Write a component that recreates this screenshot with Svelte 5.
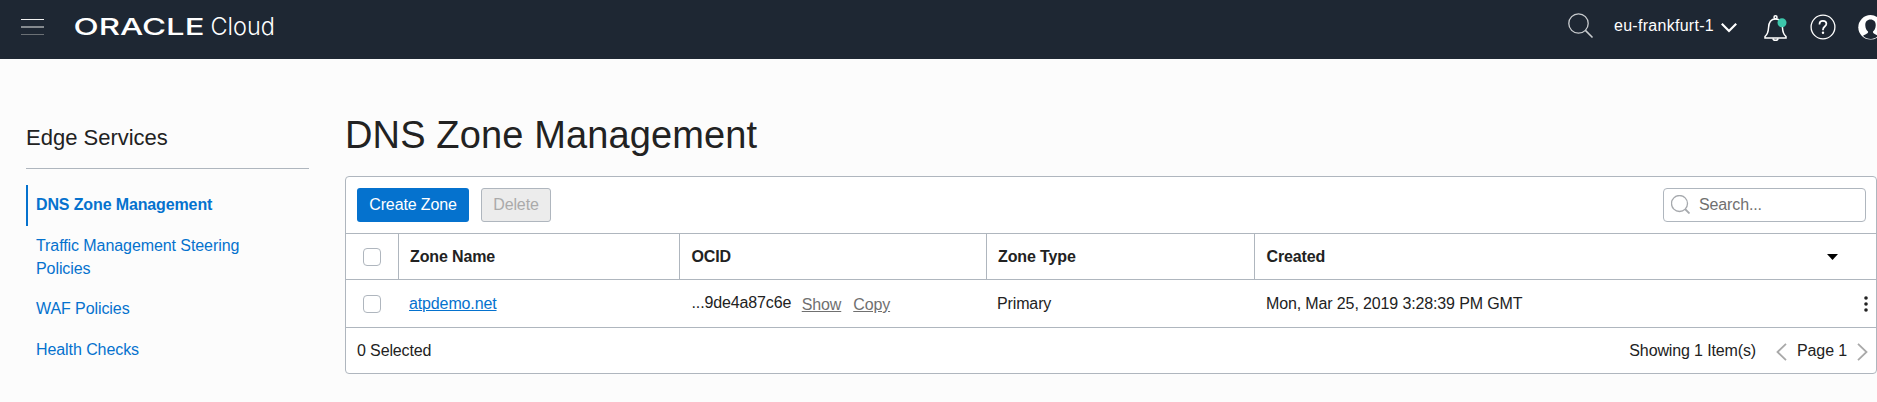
<script>
  const region = 'eu-frankfurt-1';
  const nav = [
    { label: 'DNS Zone Management', active: true },
    { label: 'Traffic Management Steering Policies' },
    { label: 'WAF Policies' },
    { label: 'Health Checks' },
  ];
  const zones = [
    { name: 'atpdemo.net', ocid: '...9de4a87c6e', type: 'Primary', created: 'Mon, Mar 25, 2019 3:28:39 PM GMT' },
  ];
</script>

<header class="topbar">
  <svg class="burger" width="23" height="16" viewBox="0 0 23 16">
    <rect width="23" height="1" fill="#f2f2f2" />
    <rect y="7" width="23" height="1" fill="#858a8f" />
    <rect y="8" width="23" height="1" fill="#858a8f" />
    <rect y="15" width="23" height="1" fill="#6b7075" />
  </svg>
  <svg class="brand" width="202" height="30" viewBox="0 0 202 30">
    <text class="oracle" x="-0.5" y="23.8" textLength="131" lengthAdjust="spacingAndGlyphs">ORACLE</text>
    <text class="cloud" x="136.5" y="23.8" textLength="64.5" lengthAdjust="spacingAndGlyphs">Cloud</text>
  </svg>
  <div class="tools">
    <svg class="find" width="26" height="26" viewBox="0 0 26 26" fill="none" stroke="#c9cccf" stroke-width="1.3">
      <circle cx="10.5" cy="10.5" r="9.7" />
      <path d="M17.4 17.4 24.5 24.5" stroke-width="1.6" />
    </svg>
    <span class="region">{region}</span>
    <svg class="down" width="16" height="10" viewBox="0 0 16 10" fill="none" stroke="#fff" stroke-width="2.2">
      <path d="M.8.8 8 8 15.2.8" />
    </svg>
    <svg class="bell" width="24" height="27" viewBox="0 0 24 27" fill="none" stroke="#fff" stroke-width="1.5">
      <circle cx="11.5" cy="2.3" r="1.5" />
      <path d="M1 22.9V21.5C3.5 19.3 4.3 17.5 4.5 13 4.7 7.5 6.5 4 11.5 4s6.8 3.5 7 9c.2 4.5 1 6.3 3.5 8.5v1.4Z" />
      <path d="M9 23.4c.2 2.6 4.800 2.600 5 0" />
      <circle cx="18" cy="7.8" r="4.5" fill="#3dc7ab" stroke="none" />
    </svg>
    <svg class="help" width="26" height="26" viewBox="0 0 26 26" fill="none" stroke="#fff" stroke-width="1.3">
      <circle cx="13" cy="13" r="11.9" />
      <path d="M9.5 10.6V10c0-2 1.400-3.200 3.400-3.200s3.500 1.200 3.500 3c0 2.700-3.400 2.700-3.400 5.600v.9" stroke-width="1.7" />
      <circle cx="13" cy="18.7" r="1.2" fill="#fff" stroke="none" />
    </svg>
    <svg class="user" width="19" height="25" viewBox="0 0 19 25">
      <circle cx="12.5" cy="12.3" r="12.2" fill="#fff" />
      <path d="M12.500 4.500c-3.500 0-5.400 2.500-5.200 6 .1 3 1.300 4.900 2.700 6 .4 1.700-.6 2.200-5 4.200 4 4.300 12 4.300 15 0-4-2-5.400-2.500-5-4.200 1.400-1.100 2.600-3 2.700-6 .2-3.500-1.700-6-5.200-6Z" fill="#1e2733" />
    </svg>
  </div>
</header>

<div class="layout">
  <aside>
    <h2>Edge Services</h2>
    <nav>
      {#each nav as item}
        <a href="#top" class:active={item.active}>{item.label}</a>
      {/each}
    </nav>
  </aside>
  <main>
    <h1>DNS Zone Management</h1>
    <section class="panel">
      <div class="toolbar">
        <button class="create">Create Zone</button>
        <button class="delete" disabled>Delete</button>
        <div class="search">
          <svg width="19" height="19" viewBox="0 0 19 19" fill="none" stroke="#a6a9ad" stroke-width="1.3">
            <circle cx="8.5" cy="8.5" r="8" />
            <path d="m14 14 4.5 4.5" stroke-width="1.8" />
          </svg>
          <span>Search...</span>
        </div>
      </div>
      <div class="row head">
        <div class="check"><i></i></div>
        <div>Zone Name</div>
        <div class="id">OCID</div>
        <div>Zone Type</div>
        <div class="created">Created
          <svg width="11" height="6" viewBox="0 0 11 6"><path d="M0 0h11L5.5 6Z" fill="#000" /></svg>
        </div>
      </div>
      {#each zones as zone}
        <div class="row body">
          <div class="check"><i></i></div>
          <div><a class="zone" href="#top">{zone.name}</a></div>
          <div class="id"><span>{zone.ocid}</span><a href="#top">Show</a><a href="#top">Copy</a></div>
          <div>{zone.type}</div>
          <div class="created">{zone.created}
            <svg class="kebab" width="4" height="16" viewBox="0 0 4 16" fill="#222">
              <circle cx="2" cy="2" r="1.8" /><circle cx="2" cy="8" r="1.8" /><circle cx="2" cy="14" r="1.8" />
            </svg>
          </div>
        </div>
      {/each}
      <div class="footer">
        <span>0 Selected</span>
        <span class="showing">Showing 1 Item(s)</span>
        <svg class="prev" width="11" height="18" viewBox="0 0 11 18"><path d="M10 .8 1.5 9 10 17.2" /></svg>
        <span class="page">Page 1</span>
        <svg class="next" width="11" height="18" viewBox="0 0 11 18"><path d="M1 .8 9.5 9 1 17.2" /></svg>
      </div>
    </section>
  </main>
</div>

<style>
  :global(body) {
    margin: 0;
    background: #fcfcfc;
    color: #222;
    font: 16px/23px "Liberation Sans", Arial, sans-serif;
    letter-spacing: -0.13px;
    overflow: hidden;
  }
  svg { display: block; flex: none; }
  .topbar {
    display: flex;
    align-items: flex-start;
    height: 59px;
    background: #1e2733;
    color: #fff;
  }
  .burger { margin: 19px 0 0 21px; }
  .brand { margin: 11px 0 0 30px; fill: #fff; letter-spacing: 0; overflow: visible; }
  .oracle { font: 500 23px Inter, sans-serif; }
  .cloud { font: 300 24px Inter, sans-serif; }
  .tools { display: flex; align-items: flex-start; margin-left: auto; }
  .find { margin-top: 13px; }
  .region { width: 101px; margin: 14px 0 0 20px; white-space: nowrap; letter-spacing: 0.28px; }
  .down { margin: 23px 0 0 6px; }
  .bell { margin: 15px 0 0 27px; }
  .help { margin: 14px 0 0 22px; }
  .user { margin: 15px 0 0 22px; }

  .layout { display: flex; height: 343px; }
  aside { width: 283px; margin-left: 26px; padding-top: 66px; flex: none; }
  h2 {
    margin: 0;
    font-size: 22px;
    line-height: 25px;
    font-weight: 400;
    letter-spacing: 0;
    padding-bottom: 18px;
    border-bottom: 1px solid #afb6be;
  }
  nav { padding-top: 16px; line-height: 22.857px; }
  nav a {
    display: block;
    padding: 9.3px 50px 8.2px 10px;
    color: #0572ce;
    text-decoration: none;
    letter-spacing: -0.08px;
  }
  nav a.active {
    font-weight: 700;
    padding-left: 8px;
    padding-bottom: 8.6px;
    border-left: 2px solid #0572ce;
    white-space: nowrap;
    letter-spacing: -0.13px;
  }
  main { width: 1532px; margin-left: 36px; flex: none; }
  h1 {
    margin: 0;
    padding-top: 54px;
    font-size: 38px;
    line-height: 44px;
    font-weight: 400;
    letter-spacing: 0.13px;
    height: 63px;
  }
  .panel {
    box-sizing: border-box;
    height: 198px;
    background: #fff;
    border: 1px solid #afb6be;
    border-radius: 4px;
  }
  .toolbar { display: flex; padding: 11px 10px 11px 11px; height: 34px; }
  button {
    box-sizing: border-box;
    height: 34px;
    padding: 0 0 1px;
    border-radius: 3px;
    font: inherit;
    letter-spacing: inherit;
  }
  .create { width: 112px; background: #0572ce; color: #fff; border: 0; }
  .delete { width: 70px; margin-left: 12px; background: #ececec; border: 1px solid #afb6be; color: #aaa; }
  .search {
    box-sizing: border-box;
    display: flex;
    width: 203px;
    margin-left: auto;
    padding: 6px 0 0 7px;
    gap: 9px;
    border: 1px solid #afb6be;
    border-radius: 4px;
    color: #707070;
  }
  .search span { line-height: 20px; }
  .row {
    display: grid;
    grid-template-columns: 52px 281px 307px 268px 1fr;
    border-top: 1px solid #afb6be;
  }
  .row > div { display: flex; align-items: center; padding-left: 11px; }
  .head { height: 45px; font-weight: 700; }
  .head > div + div { border-left: 1px solid #afb6be; }
  .head > .id, .head > .created { padding-left: 11.5px; }
  .body { height: 47px; }
  .body > .id { padding-left: 12.5px; }
  .body > .created { padding-left: 12px; }
  .row > .check { padding-left: 17px; }
  .check i {
    box-sizing: border-box;
    width: 18px;
    height: 18px;
    border: 1px solid #afb6be;
    border-radius: 4px;
    flex: none;
  }
  .zone { color: #0572ce; }
  .id a { color: #707070; margin: 2px 0 0 12px; }
  .id span { margin-top: -2px; }
  .id span + a { margin-left: 10.5px; }
  .created { justify-content: space-between; }
  .head .created { padding-right: 38px; }
  .body .created { padding-right: 8px; }
  .footer { display: flex; height: 45px; padding-left: 11px; border-top: 1px solid #afb6be; line-height: 45px; }
  .showing { margin-left: auto; }
  .footer svg { margin-top: 15px; fill: none; stroke: #a9a9a9; stroke-width: 1.8; }
  .prev { margin-left: 20px; }
  .page { margin-left: 10px; }
  .next { margin: 0 8px 0 10px; }
</style>
